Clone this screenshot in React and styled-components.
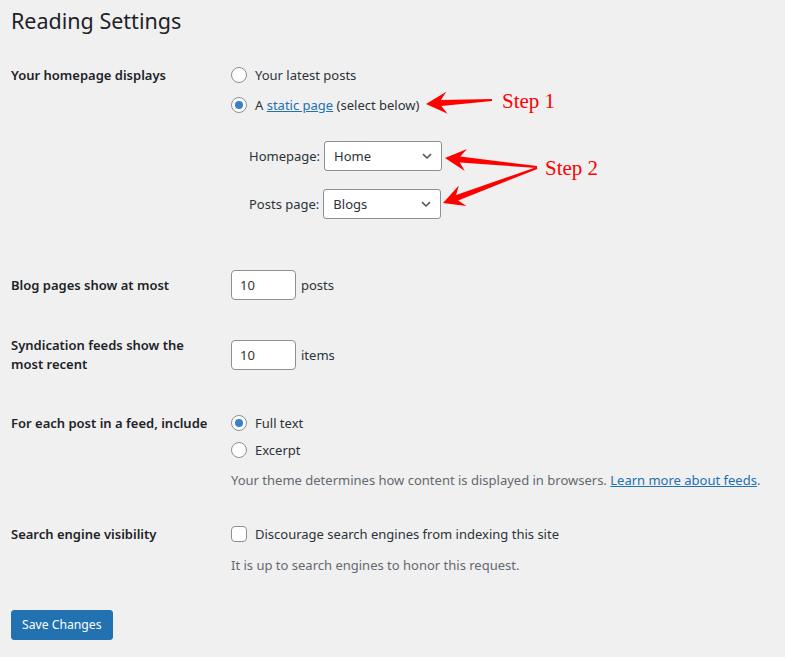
import React from "react";
import styled, { createGlobalStyle } from "styled-components";

const GlobalStyle = createGlobalStyle`
	html, body {
		margin: 0;
		padding: 0;
		background: #f0f0f1;
	}
	body {
		font-family: "Noto Sans", "Open Sans", sans-serif;
		font-size: 13px;
		color: #1d2327;
	}
`;

const Page = styled.div`
	position: relative;
	width: 785px;
	height: 657px;
	padding: 0 11px;
	box-sizing: border-box;
	overflow: hidden;
`;

const Title = styled.h1`
	margin: 0;
	padding-top: 6px;
	font-size: 21.5px;
	line-height: 30px;
	font-weight: 400;
	color: #1d2327;
`;

const Row = styled.div`
	display: flex;
	align-items: ${(p) => (p.$center ? "center" : "flex-start")};
	margin-top: ${(p) => p.$top}px;
`;

const Label = styled.div`
	flex: 0 0 200px;
	padding-right: 20px;
	font-weight: 600;
	line-height: ${(p) => p.$lh || 20}px;
	color: #1d2327;
`;

const Field = styled.div`
	flex: 1;
	display: flex;
	flex-direction: column;
`;

const Options = styled.div`
	display: flex;
	flex-direction: column;
	gap: ${(p) => p.$gap}px;
`;

const Choice = styled.label`
	display: flex;
	align-items: center;
	gap: 8px;
	height: 20px;
	line-height: 20px;
	color: #2c3338;
`;

const Radio = styled.span`
	flex: 0 0 auto;
	width: 16px;
	height: 16px;
	box-sizing: border-box;
	border: 1px solid #8c8f94;
	border-radius: 50%;
	background: #fff;
	display: flex;
	align-items: center;
	justify-content: center;

	&::after {
		content: "";
		display: ${(p) => (p.$checked ? "block" : "none")};
		width: 8px;
		height: 8px;
		border-radius: 50%;
		background: #3582c4;
	}
`;

const Checkbox = styled.span`
	flex: 0 0 auto;
	width: 16px;
	height: 16px;
	box-sizing: border-box;
	border: 1px solid #8c8f94;
	border-radius: 4px;
	background: #fff;
`;

const Link = styled.a`
	color: #2271b1;
	text-decoration: underline;
`;

const PageSelects = styled.div`
	display: flex;
	flex-direction: column;
	gap: 18px;
	margin-top: 26px;
	padding-left: 18px;
`;

const SelectRow = styled.div`
	display: flex;
	align-items: center;
	gap: 4px;
	color: #2c3338;
`;

const SelectBox = styled.div`
	width: 118px;
	height: 30px;
	box-sizing: border-box;
	border: 1px solid #8c8f94;
	border-radius: 3px;
	background: #fff;
	display: flex;
	align-items: center;
	justify-content: space-between;
	padding: 0 8px 0 9px;
	color: #2c3338;
`;

const Inline = styled.div`
	display: flex;
	align-items: center;
	gap: 5px;
	color: #2c3338;
`;

const NumberBox = styled.div`
	width: 65px;
	height: 30px;
	box-sizing: border-box;
	border: 1px solid #8c8f94;
	border-radius: 4px;
	background: #fff;
	padding: 0 8px;
	display: flex;
	align-items: center;
	color: #2c3338;
`;

const Description = styled.p`
	margin: ${(p) => p.$top}px 0 0;
	line-height: 20px;
	color: #646970;
`;

const SaveButton = styled.button`
	margin-top: 35px;
	height: 30px;
	padding: 0 10px;
	border: 1px solid #2271b1;
	border-radius: 3px;
	background: #2271b1;
	color: #fff;
	font-family: inherit;
	font-size: 12.2px;
	line-height: 28px;
	cursor: pointer;
`;

const Annotations = styled.svg`
	position: absolute;
	top: 0;
	left: 0;
	pointer-events: none;
`;

const StepText = styled.text`
	font-family: "Liberation Serif", "Times New Roman", serif;
	font-size: 21px;
	fill: #ff0000;
`;

const Chevron = () => (
	<svg width="12" height="12" viewBox="0 0 12 12">
		<path d="M2 4.2 L6 8 L10 4.2" fill="none" stroke="#50575e" strokeWidth="1.6" />
	</svg>
);

// arrow as a tapering shaft with a barbed head
const arrowPoints = ([tx, ty], [ex, ey], hl = 21, hw = 11, sw1 = 3, sw0 = 1) => {
	const dx = tx - ex;
	const dy = ty - ey;
	const len = Math.hypot(dx, dy);
	const ux = dx / len;
	const uy = dy / len;
	const nx = -uy;
	const ny = ux;
	const pt = (x, y) => `${x.toFixed(1)},${y.toFixed(1)}`;
	const bx = tx - ux * hl;
	const by = ty - uy * hl;
	const kx = tx - ux * hl * 0.72;
	const ky = ty - uy * hl * 0.72;
	return [
		pt(tx, ty),
		pt(bx + nx * hw, by + ny * hw),
		pt(kx + nx * sw1, ky + ny * sw1),
		pt(ex + nx * sw0, ey + ny * sw0),
		pt(ex - nx * sw0, ey - ny * sw0),
		pt(kx - nx * sw1, ky - ny * sw1),
		pt(bx - nx * hw, by - ny * hw),
	].join(" ");
};

const Arrow = ({ tip, tail }) => <polygon points={arrowPoints(tip, tail)} fill="#ff0000" />;

const App = () => {
	return (
		<Page>
			<GlobalStyle />
			<Title>Reading Settings</Title>

			<Row $top={29}>
				<Label>Your homepage displays</Label>
				<Field>
					<Options $gap={10}>
						<Choice>
							<Radio />
							Your latest posts
						</Choice>
						<Choice>
							<Radio $checked />
							<span>
								A <Link href="#">static page</Link> (select below)
							</span>
						</Choice>
					</Options>
					<PageSelects>
						<SelectRow>
							Homepage:
							<SelectBox>
								Home
								<Chevron />
							</SelectBox>
						</SelectRow>
						<SelectRow>
							Posts page:
							<SelectBox>
								Blogs
								<Chevron />
							</SelectBox>
						</SelectRow>
					</PageSelects>
				</Field>
			</Row>

			<Row $top={51}>
				<Label $lh={30}>Blog pages show at most</Label>
				<Inline>
					<NumberBox>10</NumberBox>
					posts
				</Inline>
			</Row>

			<Row $top={36} $center>
				<Label $lh={19}>Syndication feeds show the most recent</Label>
				<Inline>
					<NumberBox>10</NumberBox>
					items
				</Inline>
			</Row>

			<Row $top={39}>
				<Label>For each post in a feed, include</Label>
				<Field>
					<Options $gap={7}>
						<Choice>
							<Radio $checked />
							Full text
						</Choice>
						<Choice>
							<Radio />
							Excerpt
						</Choice>
					</Options>
					<Description $top={10}>
						Your theme determines how content is displayed in browsers.{" "}
						<Link href="#">Learn more about feeds</Link>.
					</Description>
				</Field>
			</Row>

			<Row $top={34}>
				<Label>Search engine visibility</Label>
				<Field>
					<Choice>
						<Checkbox />
						Discourage search engines from indexing this site
					</Choice>
					<Description $top={11}>It is up to search engines to honor this request.</Description>
				</Field>
			</Row>

			<SaveButton>Save Changes</SaveButton>

			<Annotations width="785" height="657">
				<Arrow tip={[426, 104]} tail={[492, 100]} />
				<Arrow tip={[445, 158]} tail={[537, 167]} />
				<Arrow tip={[443, 203]} tail={[537, 168]} />
				<StepText x="502" y="108">Step 1</StepText>
				<StepText x="545" y="175">Step 2</StepText>
			</Annotations>
		</Page>
	);
};

export default App;
